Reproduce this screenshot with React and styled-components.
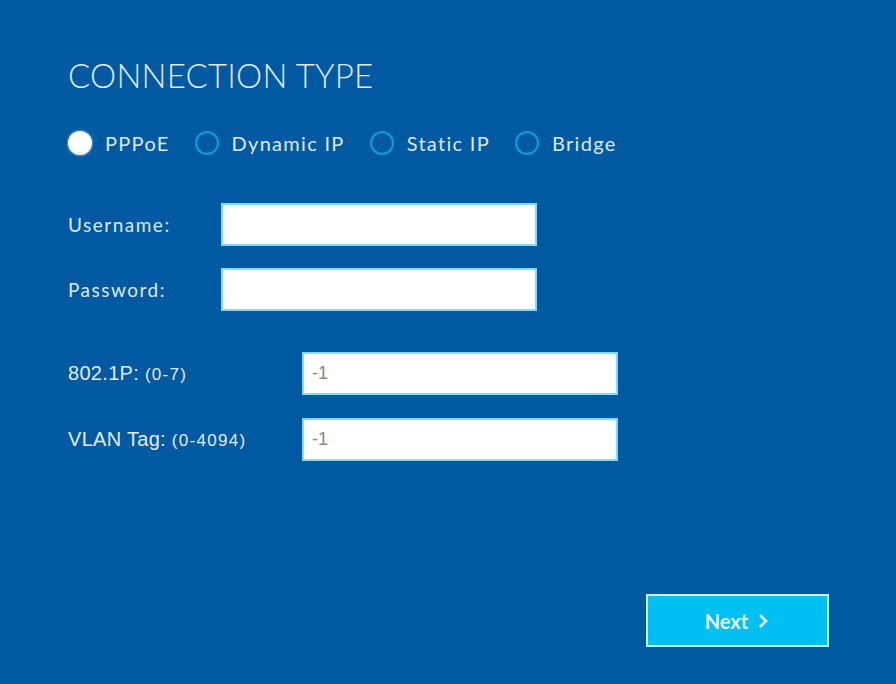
import React, { useState } from 'react';
import styled, { createGlobalStyle } from 'styled-components';

const GlobalStyle = createGlobalStyle`
  html, body {
    margin: 0;
    padding: 0;
    background-color: #0059a1;
  }
`;

const options = ['PPPoE', 'Dynamic IP', 'Static IP', 'Bridge'];

function App() {
  const [selected, setSelected] = useState('PPPoE');

  return (
    <Container>
      <GlobalStyle />
      <Title>CONNECTION TYPE</Title>
      <RadioGroup>
        {options.map((opt) => (
          <RadioItem key={opt} onClick={() => setSelected(opt)}>
            <Circle checked={selected === opt} />
            <RadioLabel>{opt}</RadioLabel>
          </RadioItem>
        ))}
      </RadioGroup>

      <Fields top="45px" gap="22px">
        <Row>
          <Label>Username:</Label>
          <Input type="text" />
        </Row>
        <Row>
          <Label>Password:</Label>
          <Input type="password" />
        </Row>
      </Fields>

      <Fields top="41px" gap="23px">
        <Row>
          <SmallLabel>
            802.1P: <Hint>(0-7)</Hint>
          </SmallLabel>
          <Input type="text" defaultValue="-1" />
        </Row>
        <Row>
          <SmallLabel>
            VLAN Tag: <Hint>(0-4094)</Hint>
          </SmallLabel>
          <Input type="text" defaultValue="-1" />
        </Row>
      </Fields>

      <Footer>
        <NextButton>
          Next
          <svg width="14" height="16" viewBox="0 0 14 16">
            <path d="M4 2 L10 8 L4 14" fill="none" stroke="#eaf6fd" strokeWidth="2.6" />
          </svg>
        </NextButton>
      </Footer>
    </Container>
  );
}

const Container = styled.div`
  width: 896px;
  height: 684px;
  box-sizing: border-box;
  padding: 55px 67px 37px 68px;
  background-color: #0059a1;
  display: flex;
  flex-direction: column;
  font-family: Lato, 'Open Sans', sans-serif;
  color: #e4ecf3;
`;

const Title = styled.h1`
  margin: 0;
  font-size: 33px;
  font-weight: 300;
  letter-spacing: 0.2px;
  line-height: 40px;
  color: #e2eaf2;
`;

const RadioGroup = styled.div`
  display: flex;
  align-items: center;
  gap: 25px;
  margin-top: 33px;
  height: 30px;
`;

const RadioItem = styled.label`
  display: flex;
  align-items: center;
  gap: 13px;
  cursor: pointer;
`;

const Circle = styled.span`
  width: 24px;
  height: 24px;
  box-sizing: border-box;
  border-radius: 50%;
  border: 2px solid ${(p) => (p.checked ? '#ffffff' : '#0a9fdc')};
  background-color: ${(p) => (p.checked ? '#ffffff' : 'transparent')};
  box-shadow: ${(p) => (p.checked ? '0 0 3px rgba(160, 230, 255, 0.9)' : 'none')};
`;

const RadioLabel = styled.span`
  font-size: 20px;
  letter-spacing: 1.3px;
  color: #dfe8f1;
`;

const Fields = styled.div`
  display: flex;
  flex-direction: column;
  gap: ${(p) => p.gap};
  margin-top: ${(p) => p.top};
`;

const Row = styled.div`
  display: flex;
  align-items: center;
`;

const Label = styled.span`
  width: 153px;
  font-size: 19px;
  letter-spacing: 1.5px;
  color: #dfe8f1;
`;

const SmallLabel = styled.span`
  width: 234px;
  font-family: 'Liberation Sans', Arial, sans-serif;
  font-size: 20px;
  letter-spacing: 0.3px;
  color: #e4ecf3;
`;

const Hint = styled.span`
  font-size: 17px;
  letter-spacing: 1.3px;
`;

const Input = styled.input`
  width: 316px;
  height: 43px;
  box-sizing: border-box;
  border: 2px solid #7fdcf7;
  background-color: #ffffff;
  padding: 0 8px;
  font-family: 'Liberation Sans', Arial, sans-serif;
  font-size: 18px;
  color: #8a8a8a;
  outline: none;
`;

const Footer = styled.div`
  margin-top: auto;
  display: flex;
  justify-content: flex-end;
`;

const NextButton = styled.button`
  width: 183px;
  height: 53px;
  box-sizing: border-box;
  background-color: #00c0f2;
  border: 2px solid #cfeefa;
  color: #eaf6fd;
  font-family: Lato, 'Open Sans', sans-serif;
  font-size: 20px;
  font-weight: 700;
  display: flex;
  align-items: center;
  justify-content: center;
  gap: 8px;
  cursor: pointer;
`;

export default App;
